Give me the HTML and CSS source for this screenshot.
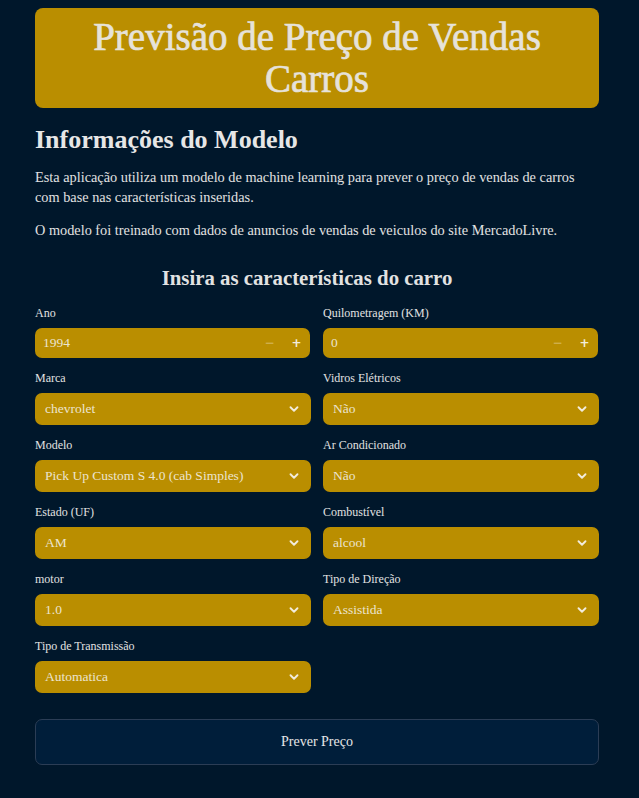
FILE: index.html
```html
<!DOCTYPE html>
<html lang="pt">
<head>
<meta charset="utf-8">
<link rel="stylesheet" href="styles.css">
</head>
<body>
<main class="app">
  <header class="banner"><h1>Previsão de Preço de Vendas Carros</h1></header>
  <h2 class="section-title">Informações do Modelo</h2>
  <p class="text">Esta aplicação utiliza um modelo de machine learning para prever o preço de vendas de carros com base nas características inseridas.</p>
  <p class="text">O modelo foi treinado com dados de anuncios de vendas de veiculos do site MercadoLivre.</p>
  <h3 class="form-title">Insira as características do carro</h3>
  <div class="form-grid">
    <div class="field">
      <label>Ano</label>
      <div class="num-input"><span class="value">1994</span><span class="step minus">−</span><span class="step plus">+</span></div>
    </div>
    <div class="field">
      <label>Quilometragem (KM)</label>
      <div class="num-input"><span class="value">0</span><span class="step minus">−</span><span class="step plus">+</span></div>
    </div>
    <div class="field">
      <label>Marca</label>
      <div class="select"><span class="value">chevrolet</span><svg class="chev" viewBox="0 0 12 12"><path d="M3 4.5l3 3 3-3"/></svg></div>
    </div>
    <div class="field">
      <label>Vidros Elétricos</label>
      <div class="select"><span class="value">Não</span><svg class="chev" viewBox="0 0 12 12"><path d="M3 4.5l3 3 3-3"/></svg></div>
    </div>
    <div class="field">
      <label>Modelo</label>
      <div class="select"><span class="value">Pick Up Custom S 4.0 (cab Simples)</span><svg class="chev" viewBox="0 0 12 12"><path d="M3 4.5l3 3 3-3"/></svg></div>
    </div>
    <div class="field">
      <label>Ar Condicionado</label>
      <div class="select"><span class="value">Não</span><svg class="chev" viewBox="0 0 12 12"><path d="M3 4.5l3 3 3-3"/></svg></div>
    </div>
    <div class="field">
      <label>Estado (UF)</label>
      <div class="select"><span class="value">AM</span><svg class="chev" viewBox="0 0 12 12"><path d="M3 4.5l3 3 3-3"/></svg></div>
    </div>
    <div class="field">
      <label>Combustível</label>
      <div class="select"><span class="value">alcool</span><svg class="chev" viewBox="0 0 12 12"><path d="M3 4.5l3 3 3-3"/></svg></div>
    </div>
    <div class="field">
      <label>motor</label>
      <div class="select"><span class="value">1.0</span><svg class="chev" viewBox="0 0 12 12"><path d="M3 4.5l3 3 3-3"/></svg></div>
    </div>
    <div class="field">
      <label>Tipo de Direção</label>
      <div class="select"><span class="value">Assistida</span><svg class="chev" viewBox="0 0 12 12"><path d="M3 4.5l3 3 3-3"/></svg></div>
    </div>
    <div class="field">
      <label>Tipo de Transmissão</label>
      <div class="select"><span class="value">Automatica</span><svg class="chev" viewBox="0 0 12 12"><path d="M3 4.5l3 3 3-3"/></svg></div>
    </div>
  </div>
  <button class="predict">Prever Preço</button>
</main>
</body>
</html>
```
FILE: styles.css
```css
html, body {
  margin: 0;
  padding: 0;
  background: #00172b;
}
body {
  font-family: "Liberation Serif", "DejaVu Serif", serif;
  color: #e2e2e2;
}
.app {
  width: 564px;
  margin: 0 0 0 35px;
  padding: 8px 0 30px;
  display: flex;
  flex-direction: column;
}
.banner {
  background: #ba8e00;
  border-radius: 8px;
  height: 100px;
  display: flex;
  align-items: center;
  justify-content: center;
}
.banner h1 {
  margin: 0;
  font-size: 39px;
  font-weight: 400;
  line-height: 42px;
  text-align: center;
  color: #e6e2da;
  -webkit-text-stroke: 0.7px #e6e2da;
  padding: 0 50px;
}
.section-title {
  margin: 17px 0 0;
  font-size: 26px;
  font-weight: 700;
  line-height: 30px;
  color: #e6e6e6;
}
.text {
  margin: 12px 0 0;
  font-size: 14.3px;
  line-height: 20px;
}
.text + .text {
  margin-top: 13px;
}
.form-title {
  margin: 25px 0 0;
  font-size: 20.8px;
  font-weight: 700;
  line-height: 26px;
  text-align: center;
  padding-right: 20px;
}
.form-grid {
  margin-top: 14px;
  display: grid;
  grid-template-columns: 1fr 1fr;
  column-gap: 12px;
  row-gap: 12px;
}
.field {
  display: flex;
  flex-direction: column;
}
.field label {
  font-size: 12px;
  line-height: 16px;
  height: 16px;
  margin-bottom: 7px;
}
.num-input, .select {
  background: #ba8e00;
  border-radius: 7px;
  display: flex;
  align-items: center;
  color: #ece4cf;
  font-size: 13.5px;
}
.num-input {
  height: 30px;
  margin-right: 1px;
  padding: 0 0 0 8px;
}
.select {
  height: 32px;
  padding: 0 10px 0 10px;
}
.value {
  flex: 1;
}
.step {
  width: 27px;
  text-align: center;
  font-family: "DejaVu Sans", sans-serif;
  font-weight: 700;
  font-size: 12px;
}
.step.minus {
  color: #cfae4a;
}
.step.plus {
  color: #f2ecdc;
}
.chev {
  width: 14px;
  height: 14px;
  fill: none;
  stroke: #f2ecdc;
  stroke-width: 1.6;
  stroke-linecap: round;
  stroke-linejoin: round;
}
.predict {
  margin-top: 26px;
  height: 46px;
  width: 100%;
  background: #001e3a;
  border: 1px solid #2b3d55;
  border-radius: 7px;
  color: #e6e6e6;
  font-family: inherit;
  font-size: 14px;
}
```
